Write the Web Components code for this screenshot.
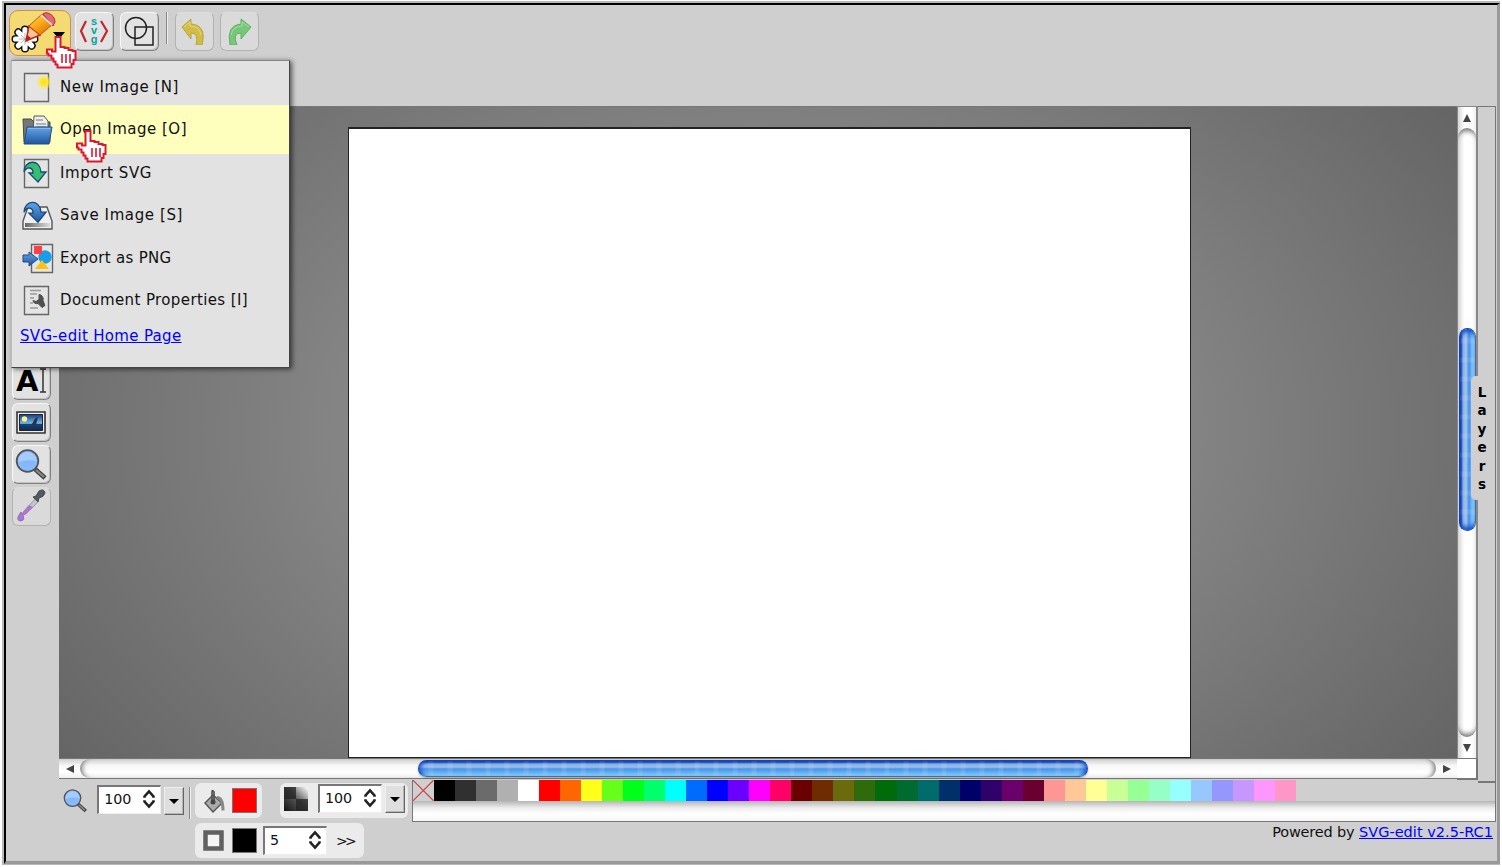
<!DOCTYPE html>
<html lang="en"><head><meta charset="utf-8"><title>SVG-edit</title>
<style>html,body{margin:0;height:100%;overflow:hidden;background:#fff}body{font:15px "DejaVu Sans",sans-serif;color:#111}</style></head>
<body><svg-editor></svg-editor>
<script>
const define=(name,html,setup)=>customElements.define(name,class extends HTMLElement{
  connectedCallback(){
    if(this.shadowRoot)return;
    this.attachShadow({mode:'open'}).innerHTML='<style>*{box-sizing:border-box}:host{display:block;box-sizing:border-box}svg{display:block}</style>'+(typeof html==='function'?html(this):html);
    if(setup)setup(this,this.shadowRoot);
  }
});
const svg=(w,h,body,vb)=>`<svg width="${w}" height="${h}" viewBox="${vb||`0 0 ${w} ${h}`}">${body}</svg>`;
const blue=`<linearGradient id="b" x2="0" y2="1"><stop stop-color="#65a4e6"/><stop offset="1" stop-color="#1e559f"/></linearGradient>`;
const page=`<path d="M2.5 1.5h24v28h-24z" fill="#e4e4e4" stroke="#666" stroke-width="1.4"/>`;
const lens=`<defs><radialGradient id="l"><stop stop-color="#7fb4ff"/><stop offset="1" stop-color="#8dbcff"/></radialGradient></defs><path d="M20 20l10 9" stroke="#444" stroke-width="4.6"/><path d="M21 21l8 7" stroke="#8b8b8b" stroke-width="2"/><circle cx="12.500" cy="12" r="10.800" fill="url(#l)" stroke="#51565c" stroke-width="1.800"/><path d="M3 13a9.500 9.500 0 0 1 19-1q-10-2-19 1" fill="#a5cbff"/>`;
const arrow=c=>`<path d="M1 13C1 1 17-1 18 13h5l-8 10-9-9h4C10 8 4 7 1 13z" fill="${c}" stroke="#174a78" stroke-width="1.300"/>`;
const icons={
 logo:svg(48,44,`<defs><linearGradient id="p" x1="0" y1="0" x2=".8" y2="1"><stop stop-color="#ffe860"/><stop offset=".45" stop-color="#ffae1c"/><stop offset="1" stop-color="#d96a00"/></linearGradient></defs>
 <g stroke="#111" stroke-width="8" stroke-linecap="round"><path d="M14 17.500v19M4.500 27h19M7.300 20.300l13.400 13.400M7.300 33.700l13.400-13.400"/></g><g stroke="#fff" stroke-width="5.200" stroke-linecap="round"><path d="M14 17.500v19M4.500 27h19M7.300 20.300l13.400 13.400M7.300 33.700l13.400-13.400"/></g><path d="M14 21v12M8 27h12M10 23l8 8M10 31l8-8" stroke="#aaa" stroke-width=".8"/>
 <path d="M15 29l3-15 11 9z" fill="#f6c59b" stroke="#c32412" stroke-width="1.500"/><path d="M18 14L31 2l11 10-13 11z" fill="url(#p)" stroke="#c64c12"/><path d="M32 2q2-2 5-1 7 3 7 9l-2 4z" fill="#e7667a" stroke="#a52d35"/><path d="M30 3l11 10" stroke="#d9dcdd" stroke-width="1.800"/><path d="M15 29l1-6 4 3z" fill="#b91d1d"/>`),
 source:svg(30,30,`<path d="M7 5L2 15l5 11M22 5l6 10-6 11" fill="none" stroke="#c1272d" stroke-width="2.200"/>`)+'<span>s</span><span>v</span><span>g</span>',
 wire:svg(30,30,`<g fill="none" stroke="#222" stroke-width="1.500"><circle cx="12" cy="12" r="10.500"/><path d="M11 11h18v18H11z"/></g>`),
 undo:svg(26,28,`<path d="M1 10L10 2v5q16 1 11 21h-6q3-12-5-12v6z" fill="#d1bd46" stroke="#b6a540"/><path d="M3 10l6-5v4q9 0 11 9" fill="none" stroke="#e4d87c"/>`),
 redo:svg(26,28,`<path d="M25 10L15 2v5Q0 8 4 28h7q-5-12 4-12v6z" fill="#77c77a" stroke="#5eb265"/><path d="M23 10l-7-5v4q-9 0-11 9" fill="none" stroke="#9fe19f"/>`),
 new:svg(32,32,`<defs><radialGradient id="n"><stop stop-color="#ffe000"/><stop offset=".4" stop-color="#ffe633"/><stop offset="1" stop-color="#ffec52" stop-opacity="0"/></radialGradient></defs>${page}<circle cx="22" cy="10" r="8" fill="url(#n)"/>`),
 open:svg(32,32,`<defs>${blue}</defs><path d="M1 4h8l3 3h16v20H2z" fill="#777" stroke="#484848"/><path d="M12 1h10l4 5v12H11z" fill="#eee" stroke="#555"/><path d="M14 5h7m-7 4h10m-10 3h10" stroke="#777"/><path d="M5 12h25l-3 17H2z" fill="url(#b)" stroke="#244c82"/><path d="M6 13.500h22" stroke="#84b8ef"/>`),
 import:svg(32,32,page+`<g transform="translate(1 1)">${arrow('#35bd70')}</g>`),
 save:svg(32,32,`<defs>${blue}<linearGradient id="s" x2="1"><stop stop-color="#666"/><stop offset="1" stop-color="#ddd"/></linearGradient></defs><path d="M6 7h19l5 14v8H1v-8z" fill="#eee" stroke="#555" stroke-width="1.400"/><path d="M3 23h25v4H3z" fill="url(#s)"/><g transform="translate(1 -.8)">${arrow('url(#b)')}</g>`),
 export:svg(32,32,`<defs>${blue}</defs><path d="M9.500 1.500h21v28h-21z" fill="#e6e6e6" stroke="#666" stroke-width="1.400"/><circle cx="23" cy="14" r="6.700" fill="#179de9"/><path d="M12 3h8v8h-8z" fill="#ff3f46"/><path d="M20 17l7 9H13z" fill="#ffc20c"/><path d="M1 12h6V9l9 7-9 7v-4H1z" fill="url(#b)" stroke="#244c82"/>`),
 props:svg(32,32,page+`<path d="M8 5.500h11M8 9h7m-7 4h4m-4 5h3m-3 5h8" stroke="#999" stroke-width="1.400"/><path d="M17 9.500a4.500 4.500 0 0 1 4 6l2 5-3 2-4-4q-4 1-5-3l3 1 3-2z" fill="#505050" stroke="#505050"/>`),
 text:`<b>A</b>`+svg(38,38,`<path d="M28 8h6m-6 23h6M31 8v23" stroke="#333" stroke-width="1.500"/>`),
 image:svg(30,23,`<defs><linearGradient id="i" x2="0" y2="1"><stop stop-color="#153d80"/><stop offset=".55" stop-color="#78b8e8"/><stop offset=".62" stop-color="#174274"/><stop offset="1" stop-color="#102a50"/></linearGradient></defs><path d="M1 1h28v21H1z" fill="#eee" stroke="#333" stroke-width="1.600"/><path d="M3.500 3.500h23v16h-23z" fill="url(#i)" stroke="#223"/><circle cx="8.500" cy="8" r="2.700" fill="#fff38a"/><path d="M15 14q2-2 3-5 2-3 4-3l-2 8z" fill="#27344b"/>`),
 zoom:svg(32,31,lens),
 drop:svg(32,34,`<path d="M20 10L9 22l-3 5 5-2 12-12z" fill="#c9c2d0" stroke="#999"/><path d="M14 16l-6 7-2 4 5-2 7-7z" fill="#aa78d2"/><path d="M18 8l3-1 3-5q5-3 6 2-1 4-6 5l-1 4z" fill="#54585f" stroke="#484b50"/><path d="M6 23q-6 8-1 9 7 0 1-9z" fill="#a678d6" stroke="#9470b8"/>`),
 bucket:svg(22,24,`<path d="M2 14L10 6l9 8-9 9z" fill="#aaa" stroke="#555" stroke-width="1.400"/><path d="M9 14V3q0-3 2 0v9" fill="none" stroke="#555" stroke-width="1.700"/><circle cx="10" cy="13" r="2.500" fill="#444"/><path d="M14 8.500q6 0 6 13" fill="none" stroke="#888" stroke-width="3"/>`),
 alpha:svg(24,24,`<defs><linearGradient id="a" y1="1" x2="1" y2="0"><stop stop-color="#111"/><stop offset=".5" stop-color="#555"/><stop offset="1" stop-color="#fff"/></linearGradient></defs><path d="M0 0h24v24H0z" fill="url(#a)"/><path d="M0 0h12v12H0zM12 12h12v12H12z" fill="#222" opacity=".75"/>`),
 ring:svg(21,21,`<path d="M2.500 2.500h16v16h-16z" fill="#f4f4f4" stroke="#606060" stroke-width="4.500"/>`)
};
// Spreads a label over a fixed advance width, whatever the metrics of the font.
define('fit-text','<style>:host{display:inline-block;white-space:nowrap}span{display:inline-block;text-decoration:inherit}</style><span><slot></slot></span>',(e,r)=>{
  const s=r.querySelector('span'),w=+e.getAttribute('w');
  s.style.letterSpacing=(w-s.getBoundingClientRect().width)/e.textContent.length+'px';
});
define('ui-icon',e=>`<style>:host{display:block;position:relative}span{position:absolute;left:9px;top:0;width:12px;text-align:center;font:bold 11px/10px "Liberation Sans",sans-serif;color:#08a0a0}span:nth-of-type(2){top:9px}span:nth-of-type(3){top:18px}b{position:absolute;left:4px;top:3px;font:bold 29px/34px "DejaVu Sans",sans-serif;color:#000}</style>${icons[e.getAttribute('name')]}`);
define('tool-button','<style>:host{display:flex;align-items:center;justify-content:center;width:39px;height:39px;flex:none;background:#e2e2e2;border:1px solid;border-color:#f7f7f7 #808080 #808080 #f7f7f7;box-shadow:inset -1px -1px #c4c4c4;border-radius:6px;padding:0 1px 1px 0}:host([off]){background:#dadada;border:1px solid #b2b2b2;border-top-color:#ddd;box-shadow:none}</style><slot></slot>');
define('menu-item',e=>`<style>:host{display:flex;align-items:center;height:41px;padding:4px 0 0 10px}:host([active]){background:#ffffbd;height:49px;padding:0 0 1px 10px}:host([low]){height:48px;padding-top:0}:host([high]){height:37px;padding-top:0}ui-icon{width:32px;margin:1px 6px -1px 0}:host(:not([active])) ui-icon{margin-top:0;margin-bottom:-2px}:host([active]) ui-icon{margin:3px 6px 0 0}</style><ui-icon name="${e.getAttribute('icon')}"></ui-icon><slot></slot>`);
define('hand-cursor',svg(31,34,`<path d="M9.500 2h5v10h4v1h4v2h4v1h3v9h-2v4h-2v3.500h-14v-3h-2v-3h-2v-3h-2v-3h-3v-2h-1.500v-4h5v2h3.500z" fill="#fff" stroke="#dc1730" stroke-width="2"/><path d="M16 19v9m4-9v9m4-9v9" stroke="#dc1730" stroke-width="1.600"/>`));
define('file-menu',`<style>:host{width:279px;height:308px;background:#e2e2e2;border:solid;border-width:1px 1.500px 1.500px 1px;border-color:#888 #444 #444 #bbb;box-shadow:2px 1px 5px #0009;padding:3px 0 0 0}a{display:block;color:#00f;margin:3px 0 0 8px}</style>
<menu-item icon="new"><fit-text w="119">New Image [N]</fit-text></menu-item><menu-item icon="open" active><fit-text w="127">Open Image [O]</fit-text></menu-item><menu-item icon="import" high><fit-text w="92">Import SVG</fit-text></menu-item><menu-item icon="save" low><fit-text w="123">Save Image [S]</fit-text></menu-item><menu-item icon="export" high><fit-text w="111.500">Export as PNG</fit-text></menu-item><menu-item icon="props" low><fit-text w="188">Document Properties [I]</fit-text></menu-item><a><fit-text w="161.500" style="text-decoration:underline">SVG-edit Home Page</fit-text></a>`);
define('top-bar',`<style>:host{height:101px;padding:5px 0 0 3px}nav{display:flex}.main{width:62px;height:46px;border:1px solid #d38b4f;border-radius:9px;background:#f3da72;padding:1px 0 0 1px;display:flex;position:relative}.main i{position:absolute;left:43px;top:21px;border:6px solid transparent;border-top:7px solid #000}tool-button{margin:2px 0 0 4px}tool-button+tool-button{margin-left:6px}hr{width:2px;height:32px;border:0;border-left:1.500px solid #888;border-right:1px solid #eee;margin:2px 0 0 7px}</style>
<nav><div class="main"><ui-icon name="logo"></ui-icon><i></i></div><tool-button><ui-icon name="source"></ui-icon></tool-button><tool-button><ui-icon name="wire"></ui-icon></tool-button><hr><tool-button off style="margin-left:6.500px"><ui-icon name="undo"></ui-icon></tool-button><tool-button off><ui-icon name="redo"></ui-icon></tool-button></nav>`);
define('tool-column','<style>:host{width:53px;padding:255px 0 0 6px;display:flex;flex-direction:column;gap:3px}</style><tool-button><ui-icon name="text" style="width:38px;height:38px"></ui-icon></tool-button><tool-button><ui-icon name="image"></ui-icon></tool-button><tool-button><ui-icon name="zoom"></ui-icon></tool-button><tool-button off><ui-icon name="drop"></ui-icon></tool-button>');
define('scroll-bar',`<style>:host{display:flex;height:21px;border-top:1px solid #777;border-bottom:1.500px solid #777;background:linear-gradient(#d0d0d0,#f7f7f7 35%,#fff 70%,#eee)}.cap{width:21px;display:flex;align-items:center;justify-content:center}.cap:before{content:"";border:4px solid transparent;border-left:8px solid #444;border-right:0}.cap.first:before{transform:scaleX(-1)}.track{flex:1;border-radius:10px;box-shadow:inset 6px 0 5px -4px #777,inset -6px 0 5px -4px #777;padding-left:338px}.thumb{width:670px;height:17px;margin-top:1px;border-radius:9px;background:repeating-linear-gradient(90deg,#fff0 0 9px,#ffffff18 10px 14px,#fff0 15px 19px),linear-gradient(#1542b4 0 1px,#83ade4 3px,#9bbfe9 6px,#4b94e8 8px,#65b4f7 12px,#a2e8ff);border:1px solid #1746b0;border-bottom-color:#4c6e91;box-shadow:inset 4px 0 4px -2px #1552cc,inset -4px 0 4px -2px #1552cc,0 1px 2px #5558}
:host([vertical]){flex-direction:column;width:21px;height:auto;border:solid;border-color:#888;border-width:1px 2px 0 1px;background:linear-gradient(90deg,#d6d6d6,#fff 35%,#fff 75%,#eee)}:host([vertical]) .cap{width:auto;height:21px}:host([vertical]) .cap:before{transform:rotate(90deg)}:host([vertical]) .cap.first:before{transform:rotate(-90deg)}:host([vertical]) .track{padding:200px 0 0;box-shadow:inset 0 7px 5px -4px #777,inset 0 -7px 5px -4px #777}:host([vertical]) .thumb{width:17px;height:203px;margin:0 0 0 1px;border-color:#1746b0 #4c6e91 #1746b0 #1746b0;background:repeating-linear-gradient(#fff0 0 9px,#ffffff18 10px 14px,#fff0 15px 19px),linear-gradient(90deg,#1542b4 0 1px,#83ade4 3px,#a3c6ed 6px,#468de7 9px,#78bff8 12px,#91d6ff);box-shadow:inset 0 5px 4px -2px #1552cc,inset 0 -5px 4px -2px #1552cc}</style><div class="cap first"></div><div class="track"><div class="thumb"></div></div><div class="cap"></div>`);
define('work-area',`<style>:host{width:1419px;display:grid;grid-template:652px 22px/1398px 21px}.desk{border-top:1px solid #777;background:radial-gradient(ellipse 850px 560px at 50% 50%,#aaa 0,#848484 50%,#656565 100%);padding:20px 0 0 289px}.paper{width:843px;height:631px;border:solid #222;border-width:2px 1.500px 1px;background:#fff}.corner{background:#fff;border:solid #777;border-width:1px 2px 2px 0}</style><div class="desk"><div class="paper"></div></div><scroll-bar vertical></scroll-bar><scroll-bar></scroll-bar><div class="corner"></div>`);
define('layers-panel',`<style>:host{width:18px;height:677px;border:solid #777;border-width:1px 1.500px 2px 0;position:relative;z-index:1}div{position:absolute;left:-7px;top:269px;width:20px;height:124px;background:#cfcfcf;border-radius:5px 0 0 5px;padding:7px 0 0 2px;text-align:center;font:bold 13.500px/18.400px "DejaVu Sans",sans-serif;color:#000}</style><div>L<br>a<br>y<br>e<br>r<br>s</div>`);
define('spin-box',`<style>:host{display:flex;align-items:center;justify-content:space-between;width:64px;height:29px;background:#fff;border:solid;border-width:2.500px 1px 1px 2.500px;border-color:#777 #eee #eee #777;padding:0 5px 2px 5px;font-size:14.300px}</style><slot></slot>${svg(12,20,'<path d="M1.500 8.700V7.500L6 2.500l4.500 5v1.200M1.500 11.300v1.200l4.500 5 4.500-5v-1.200" fill="none" stroke="#222" stroke-width="2.600"/>')}`);
define('drop-arrow','<style>:host{width:20px;height:28px;background:#dfdfdf;border:solid;border-width:1px 1.500px 1.500px 1px;border-color:#eee #666 #666 #eee;box-shadow:inset -1px -1px #b5b5b5;display:flex;align-items:center;justify-content:center}i{border:5px solid transparent;border-top:5px solid #000;border-bottom:0}</style><i></i>');
define('paint-box','<style>:host{display:flex;background:#ebebeb;border-radius:6px;height:35px;align-items:center}</style><slot></slot>');
define('colour-swatch','<style>:host{width:25px;height:25px;border:1.500px solid #777}</style>');
define('colour-palette',`<style>:host{width:1084px;height:42px;border:solid #777;border-width:0 1px 1.500px 1.500px;background:#cfcfcf}.row{display:flex;height:21px}.row i{width:21.050px}.row svg{width:20.500px}.bar{height:20px;background:linear-gradient(#b5b5b5,#eee 35%,#fff 65%,#f6f6f6)}</style><div class="row">${svg(21,21,'<path d="M0 0l21 21M21 0L0 21" stroke="#d04040" stroke-width="1.200"/>')}</div><div class="bar"></div>`,(e,r)=>{
 const list='000 303030 6b6b6b b0b0b0 fff f00 ff6600 ffff1a 66ff1a 00ff1a 00ff6b 0ff 006bff 00f 6b00ff f0f ff0066 6b0000 6e2c00 6b6b0b 2e6b0b 006b0b 006b30 006b6b 00306b 00006b 30006b 6b006b 6b0030 ff9696 ffc896 ffff96 c8ff96 96ff96 96ffc8 96ffff 96c8ff 9696ff c896ff ff96ff ff96c8'.split(' ');
 r.querySelector('.row').insertAdjacentHTML('beforeend',list.map(c=>`<i style="background:#${c}"></i>`).join(''));
});
define('bottom-bar',`<style>:host{display:grid;grid-template-columns:406px 1084px;height:81px}.controls{display:flex;padding:3px 0 0 57px}.zoom{display:flex;width:121px}.zoom ui-icon{zoom:.76;margin:8px 13px 0 0}.zoom spin-box{margin:2px 3px 0 0}.zoom drop-arrow{margin-top:4px}hr{margin:4px 4px 0 5px;border:0;border-left:1.500px solid #888;border-right:1px solid #eee;width:2px;height:32px}.paint{display:flex;flex-direction:column;gap:5px}.line{display:flex;gap:18px}.foot{font-size:14.500px;text-align:right;padding:2px 3px 0 0}.foot a{color:#00f}</style>
<div class="controls"><div class="zoom"><ui-icon name="zoom"></ui-icon><spin-box><fit-text w="27">100</fit-text></spin-box><drop-arrow></drop-arrow></div><hr><div class="paint"><div class="line"><paint-box style="width:67px;padding:0 5px 0 8px;justify-content:space-between"><ui-icon name="bucket"></ui-icon><colour-swatch style="background:#f00"></colour-swatch></paint-box><paint-box style="width:128px;padding:0 3px 3px 4px"><ui-icon name="alpha"></ui-icon><spin-box style="margin:-1px 3px 0 10px"><fit-text w="27">100</fit-text></spin-box><drop-arrow></drop-arrow></paint-box></div><paint-box style="width:169px;padding:0 9px 0 8px"><ui-icon name="ring"></ui-icon><colour-swatch style="background:#000;margin:0 6px 0 8px"></colour-swatch><spin-box><fit-text w="9">5</fit-text></spin-box><fit-text w="18" style="font-size:14px;margin-left:9px">&gt;&gt;</fit-text></paint-box></div></div>
<div><colour-palette></colour-palette><div class="foot"><fit-text w="82">Powered by </fit-text> <a><fit-text w="134" style="text-decoration:underline">SVG-edit v2.5-RC1</fit-text></a></div></div>`);
define('svg-editor',`<style>:host{width:1498px;height:864px;margin:1px 0 0 2px;border:solid #b8b8b8;border-width:2.500px 0 1px 2px;position:relative}.frame{height:861px;width:1496px;background:#cfcfcf;border:solid;border-width:2px 3px 3px 2px;border-color:#000 #999 #999 #000}.middle{display:flex;height:674px}.over{position:absolute}</style>
<div class="frame"><top-bar></top-bar><div class="middle"><tool-column></tool-column><work-area></work-area><layers-panel></layers-panel></div><bottom-bar></bottom-bar></div><file-menu class="over" style="left:7px;top:57px"></file-menu><hand-cursor class="over" style="left:42px;top:32px"></hand-cursor><hand-cursor class="over" style="left:72px;top:126px"></hand-cursor>`);
</script></body></html>
